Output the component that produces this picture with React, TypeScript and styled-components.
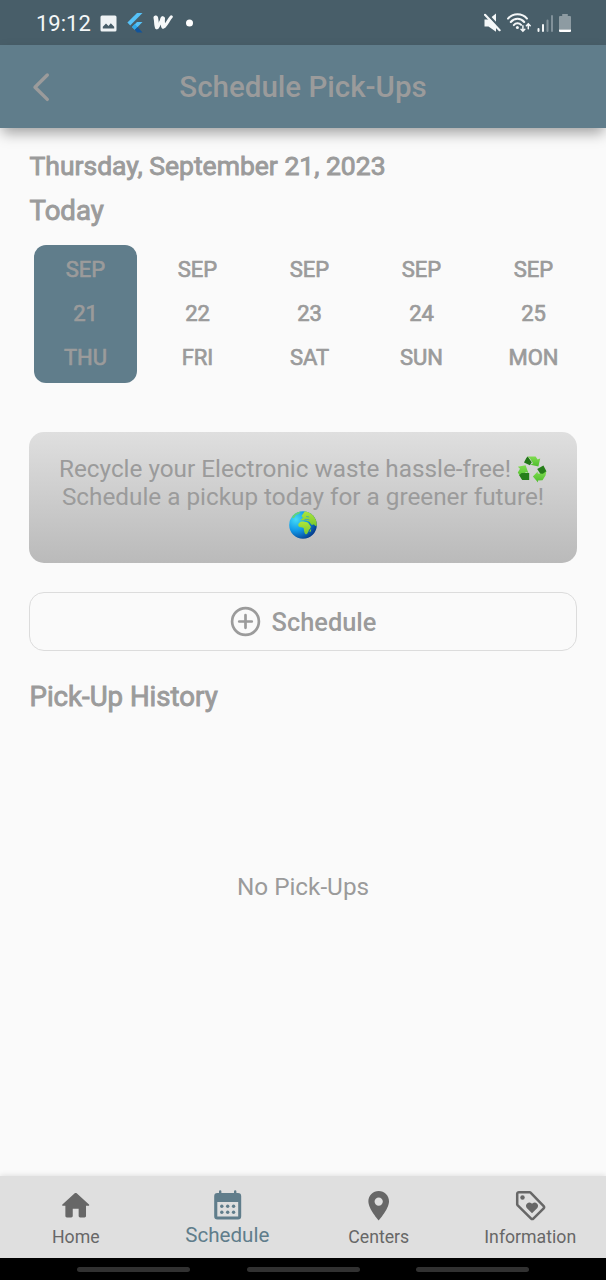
import React from "react";
import styled, { createGlobalStyle } from "styled-components";

const Global = createGlobalStyle`
  * { box-sizing: border-box; }
  body { margin: 0; background: #fafafa; font-family: Roboto, "Liberation Sans", sans-serif; }
  svg { display: block; flex: none; }
`;

const Screen = styled.div`
  width: 606px;
  height: 1280px;
  display: flex;
  flex-direction: column;
  overflow: hidden;
  background: #fafafa;
  color: #9b9b9b;
`;

const StatusBar = styled.div`
  height: 45px;
  flex: none;
  display: flex;
  align-items: center;
  background: #485e69;
  color: #f4f7f8;
  padding: 1px 35px 0 36px;
`;

const Clock = styled.span`
  width: 55px;
  margin-right: 9px;
  padding-top: 2px;
  font-size: 22px;
  line-height: 26px;
  white-space: nowrap;
`;

const StatusIcons = styled.div<{ $gap: number; $end?: boolean }>`
  display: flex;
  align-items: center;
  gap: ${(p) => p.$gap}px;
  margin-left: ${(p) => (p.$end ? "auto" : "0")};
`;

const AppBar = styled.header`
  height: 83px;
  flex: none;
  display: grid;
  grid-template-columns: 82px 1fr 82px;
  align-items: center;
  background: #607d8b;
  box-shadow: 0 7px 13px -2px rgba(0, 0, 0, 0.36);
`;

const BackButton = styled.button`
  border: 0;
  background: none;
  padding: 0 0 0 32px;
`;

const Title = styled.h1`
  margin: 0;
  text-align: center;
  font-size: 29.5px;
  font-weight: 500;
  line-height: 36px;
  letter-spacing: 0;
`;

const Content = styled.main`
  flex: 1;
  display: flex;
  flex-direction: column;
  padding: 16px 29px 0 29px;
`;

const Heading = styled.h2<{ $size: number }>`
  margin: 0;
  padding-left: 0.5px;
  font-size: ${(p) => p.$size}px;
  line-height: 44px;
  font-weight: 400;
  -webkit-text-stroke: 0.9px currentColor;
  white-space: nowrap;
`;

const DateHeader = styled.div`
  display: flex;
  flex-direction: column;
  gap: 1px;
`;

const Days = styled.div`
  display: flex;
  gap: 9px;
  margin: 11.5px 0 0 5px;
`;

const Day = styled.div<{ $active?: boolean }>`
  width: 103px;
  height: 138.5px;
  flex: none;
  display: flex;
  flex-direction: column;
  align-items: center;
  justify-content: center;
  border-radius: 12px;
  background: ${(p) => (p.$active ? "#607d8b" : "transparent")};
  font-size: 22px;
  line-height: 44px;
  -webkit-text-stroke: 0.7px currentColor;
`;

const Banner = styled.section`
  height: 131px;
  margin-top: 48.5px;
  padding: 23px 20px 0;
  border-radius: 15px;
  background: linear-gradient(#dfdfdf, #bababa);
  display: flex;
  flex-direction: column;
  align-items: center;
  font-size: 24.3px;
  line-height: 28px;
`;

const BannerLine = styled.div`
  height: 28px;
  display: flex;
  align-items: center;
  gap: 6px;
  white-space: nowrap;
`;

const ScheduleButton = styled.button`
  height: 59px;
  margin: 29.5px 0 0;
  padding: 0;
  border: 1.5px solid #dcdcdc;
  border-radius: 15px;
  background: transparent;
  display: flex;
  align-items: center;
  justify-content: center;
  gap: 11px;
  color: inherit;
  font: 500 25.4px/30px Roboto, sans-serif;
`;

const ButtonLabel = styled.span`
  padding-top: 1px;
`;

const History = styled.section`
  padding-top: 24px;
  display: flex;
  flex-direction: column;
`;

const Empty = styled.p`
  margin: 154px 0 0;
  text-align: center;
  font-size: 24.3px;
  line-height: 28px;
`;

const TabBar = styled.nav`
  height: 82.5px;
  flex: none;
  display: grid;
  grid-template-columns: repeat(4, 1fr);
  background: #dfdfdf;
  box-shadow: 0 -1px 5px rgba(0, 0, 0, 0.1);
`;

const Tab = styled.div<{ $active?: boolean }>`
  display: flex;
  flex-direction: column;
  align-items: center;
  padding-top: ${(p) => (p.$active ? 11 : 12)}px;
  color: ${(p) => (p.$active ? "#607d8b" : "#676767")};
  font-size: ${(p) => (p.$active ? 20.6 : 17.7)}px;
  line-height: ${(p) => (p.$active ? 27 : 28)}px;
  white-space: nowrap;
`;

const SystemNav = styled.footer`
  height: 22px;
  flex: none;
  display: flex;
  justify-content: center;
  gap: 56.5px;
  padding-top: 9px;
  background: #000;
`;

const Pill = styled.span`
  width: 113px;
  height: 5px;
  border-radius: 3px;
  background: #313131;
`;

const PictureIcon = () => (
  <svg width="17" height="17" viewBox="0 0 17 17" fill="#eff3f5">
    <path
      fillRule="evenodd"
      d="M2 .5h13a1.5 1.5 0 0 1 1.500 1.500v13a1.500 1.500 0 0 1-1.500 1.500H2A1.500 1.500 0 0 1 .5 15V2A1.500 1.500 0 0 1 2 .5ZM2.800 13.500h11.400v-1.800L10.800 8.200 8.500 10.900 6 8.400l-3.200 3.400Z"
    />
  </svg>
);

const FlutterIcon = () => (
  <svg width="16" height="20" viewBox="0 0 16 20">
    <path d="M10 0h5.500L3.200 12.400.4 9.600Z" fill="#56c2f8" />
    <path d="M10 9h5.500l-4.900 4.900-2.800 2.900L5 13.900Z" fill="#56c2f8" />
    <path d="m7.800 11.100 2.800 2.800-2.800 2.900L5 13.900Z" fill="#2fa9ea" />
    <path d="m7.800 16.800 2.800-2.900 4.900 5.500H10Z" fill="#11549b" />
  </svg>
);

const WattpadIcon = () => (
  <svg width="20" height="16" viewBox="0 0 20 16" fill="none" stroke="#f6f8f9" strokeLinecap="round" strokeLinejoin="round">
    <path d="M2.700 3.600C3.400 7 3.200 10 3.700 12.700 6.500 10.500 7.700 6 9.800 3.200c.3 3-.8 6.500.2 9 3.200-1.200 5-6.700 8.300-10.400" strokeWidth="3" />
    <path d="M2.800 2.800c.8 3 .5 6 1.200 9M9.700 3.500c-.3 2.500-.4 5 .8 7.500" strokeWidth="4.600" />
  </svg>
);

const MuteIcon = () => (
  <svg width="18" height="20" viewBox="0 0 18 20">
    <path d="M.5 6.500h4L12 .6v18.200l-7.500-5.300h-4Z" fill="#f4f7f8" />
    <path d="M2.200.2 17 15.800" stroke="#485e69" strokeWidth="2.600" />
    <path d="M1 1.800 15.600 17.200" stroke="#f4f7f8" strokeWidth="2.200" strokeLinecap="round" />
  </svg>
);

const WifiIcon = () => (
  <svg width="24" height="20" viewBox="0 0 24 20" fill="none" stroke="#f4f7f8" strokeWidth="2" strokeLinecap="round">
    <path d="M1 5.600C6-.1 15-.1 20 5.600M3.800 9c3.500-4.200 10-4.200 13.400 0M6.800 12.100c2-2.300 5.300-2.300 7.300-.2" />
    <circle cx="10.400" cy="14.500" r="1.500" fill="#f4f7f8" stroke="none" />
    <path d="M15.900 12.800v5M14 16.200l1.900 1.900 1.900-1.900M21.300 15.800v-4.700M19.400 12.700l1.900-1.900 1.900 1.900" strokeWidth="1.500" />
  </svg>
);

const SignalIcon = () => (
  <svg width="17" height="19" viewBox="0 0 17 19" strokeWidth="2" strokeLinecap="round">
    <path d="M1.500 15v2M6 11v6" stroke="#f4f7f8" />
    <path d="M10.500 6.500V17M15 2v15" stroke="#81919a" />
  </svg>
);

const BatteryIcon = () => (
  <svg width="12" height="19" viewBox="0 0 12 19">
    <path d="M3.200 0h5.600v2H11a1 1 0 0 1 1 1v12.500H0V3a1 1 0 0 1 1-1h2.200Z" fill="#8d9ba2" />
    <path d="M0 15.500h12V17a1 1 0 0 1-1 1H1a1 1 0 0 1-1-1Z" fill="#fff" />
  </svg>
);

const BackIcon = () => (
  <svg width="20" height="30" viewBox="0 0 20 30" fill="none" stroke="#9b9b9b" strokeWidth="3.400" strokeLinecap="round" strokeLinejoin="round">
    <path d="M15.300 3 3 15.200 15.300 27.400" />
  </svg>
);

const RecycleIcon = () => (
  <svg width="30" height="28" viewBox="0 0 30 28">
    <defs>
      <linearGradient id="leaf" x1="0" y1="0" x2="0" y2="1">
        <stop offset="0" stopColor="#7fdc50" />
        <stop offset="1" stopColor="#4ebd2c" />
      </linearGradient>
    </defs>
    <path d="M10.500 1.500H18.600L20.600 4.500 23.200 3.400 21.400 11.600 13.600 9.800 16 8.200 13 3.500Z" fill="url(#leaf)" />
    <path d="M10.700 1.500 14.800 7.200 12.900 10.200 7 7.400 9.300 2.900Z" fill="#237719" />
    <path d="M.8 11.800 8.600 10.300 11.400 18 8.800 17 5 24.200.8 17.600 3 13.800Z" fill="url(#leaf)" />
    <path d="M4.600 18H12.200v7.100H5.200L2.200 20.200Z" fill="#267e1a" />
    <path d="m20.200 14.100 6.200-3.500 3 5.700-2.200 3.400-3.600-.4Z" fill="#267e1a" />
    <path d="M29.300 16.200 28.500 20.500 25.500 25.300 21 25.500v2L15.900 21.500 20.700 16.400v2.200l5.200.2Z" fill="url(#leaf)" />
  </svg>
);

const GlobeIcon = () => (
  <svg width="28" height="28" viewBox="0 0 28 28">
    <defs>
      <radialGradient id="sea" cx="0.25" cy="0.3" r="0.8">
        <stop offset="0" stopColor="#45dcf6" />
        <stop offset="0.5" stopColor="#1199e8" />
        <stop offset="1" stopColor="#063c8c" />
      </radialGradient>
      <linearGradient id="land" x1="0" y1="0" x2="0" y2="1">
        <stop offset="0" stopColor="#aee639" />
        <stop offset="1" stopColor="#78c92f" />
      </linearGradient>
      <clipPath id="disc">
        <circle cx="14" cy="14" r="13.800" />
      </clipPath>
    </defs>
    <g clipPath="url(#disc)">
      <rect width="28" height="28" fill="url(#sea)" />
      <path
        d="M10.500 11.800C12 10.200 14 10.600 15.500 10.800c2 .5 3.600.1 4.400 1.900l2 3.100c-.2 2-2 2.400-2.300 4.100-.7 2-1.700 3.400-3.100 3.400-1.200-1.200-1.200-3-1.600-4.600.2-1.800-1-2.300-2.900-2.400-2.700-.3-3.800-2.300-1.500-4.500Z"
        fill="url(#land)"
      />
      <path
        d="M11.500 9.600c.2-1.500 1.600-1.800 2.400-2.900L12.500 5 16 0h7l5 6v8.500c-1 .8-2 .3-2.500-.6-.8-.8-1.800-.5-2.500.2-1.400-.8-1.700-2.300-2.700-3.300l-2.600-1c-2.700-.7-3.700-.8-6.200-.2Z"
        fill="url(#land)"
      />
      <path d="M3 7C4 3 7 0 12 .3L10 3 7 4 5 7Z" fill="#62d27a" />
      <path d="M15.500 8.700c1.800-.6 3.300-.2 4.800.1M17.200 5.500l3 .5" stroke="#2c9fd0" strokeWidth="0.800" fill="none" />
      <path d="m21.700 18.500-.7 2.400" stroke="#8bd52d" strokeWidth="1" />
    </g>
  </svg>
);

const PlusCircleIcon = () => (
  <svg width="31" height="31" viewBox="0 0 31 31" fill="none" stroke="#9b9b9b" strokeWidth="2.700" strokeLinecap="round">
    <circle cx="15.500" cy="15.500" r="13.400" />
    <path d="M15.500 9.200v12.600M9.200 15.500h12.600" />
  </svg>
);

const HomeIcon = () => (
  <svg width="35.400" height="35.400" viewBox="0 0 24 24" fill="currentColor">
    <path d="M10 19v-5h4v5c0 .55.45 1 1 1h3c.55 0 1-.45 1-1v-7h1.700c.46 0 .68-.57.33-.87L12.670 3.600c-.38-.34-.96-.34-1.340 0l-8.360 7.530c-.34.300-.13.870.33.870H5v7c0 .55.45 1 1 1h3c.55 0 1-.45 1-1z" />
  </svg>
);

const CalendarIcon = () => (
  <svg width="35.400" height="35.400" viewBox="0 0 35.400 35.400" fill="currentColor">
    <path
      fillRule="evenodd"
      d="M7.400 6H9V4.500a1 1 0 0 1 2.400 0V6h12.600V4.500a1 1 0 0 1 2.400 0V6H28a3.200 3.200 0 0 1 3.200 3.200v20a3.200 3.200 0 0 1-3.200 3.200H7.400a3.200 3.200 0 0 1-3.200-3.200V9.200A3.200 3.200 0 0 1 7.400 6ZM7.300 15v14.500h20.900V15Z"
    />
    {[11.8, 17.7, 23.6].map((x) => (
      <React.Fragment key={x}>
        <circle cx={x} cy="19.300" r="1.700" />
        <circle cx={x} cy="25.300" r="1.700" />
      </React.Fragment>
    ))}
  </svg>
);

const PinIcon = () => (
  <svg width="35.400" height="35.400" viewBox="0 0 24 24" fill="currentColor">
    <path fillRule="evenodd" d="M12 2C8.130 2 5 5.130 5 9c0 5.250 7 13 7 13s7-7.750 7-13c0-3.870-3.130-7-7-7Zm0 10a2.800 2.800 0 1 1 0-5.600 2.800 2.800 0 0 1 0 5.600Z" />
  </svg>
);

const TagHeartIcon = () => (
  <svg width="35.400" height="35.400" viewBox="0 0 24 24" fill="currentColor">
    <path
      d="M4 2.850h7.200l.7.300 8.900 9.100c.45.45.45 1.050 0 1.500l-7 7c-.45.45-1.050.45-1.500 0l-9.100-8.900-.35-.75V4A1.150 1.150 0 0 1 4 2.850Z"
      fill="none"
      stroke="currentColor"
      strokeWidth="1.700"
      strokeLinejoin="round"
    />
    <circle cx="6.450" cy="6.500" r="1.500" />
    <path d="m12.900 17.100-3.600-3.600a2.300 2.300 0 0 1 3.200-3.200l.4.400.4-.4a2.300 2.300 0 0 1 3.200 3.200Z" />
  </svg>
);

const days: [string, string][] = [
  ["21", "THU"],
  ["22", "FRI"],
  ["23", "SAT"],
  ["24", "SUN"],
  ["25", "MON"],
];

const tabs = [
  { label: "Home", Icon: HomeIcon },
  { label: "Schedule", Icon: CalendarIcon },
  { label: "Centers", Icon: PinIcon },
  { label: "Information", Icon: TagHeartIcon },
];

export default function App() {
  return (
    <Screen>
      <Global />
      <StatusBar>
        <Clock>19:12</Clock>
        <StatusIcons $gap={10}>
          <PictureIcon />
          <FlutterIcon />
          <WattpadIcon />
          <svg width="12" height="8" viewBox="0 0 12 8">
            <circle cx="6.500" cy="4" r="3.500" fill="#fff" />
          </svg>
        </StatusIcons>
        <StatusIcons $gap={5.5} $end>
          <MuteIcon />
          <WifiIcon />
          <SignalIcon />
          <BatteryIcon />
        </StatusIcons>
      </StatusBar>
      <AppBar>
        <BackButton aria-label="Back">
          <BackIcon />
        </BackButton>
        <Title>Schedule Pick-Ups</Title>
      </AppBar>
      <Content>
        <DateHeader>
          <Heading $size={26.5}>Thursday, September 21, 2023</Heading>
          <Heading $size={27.6}>Today</Heading>
        </DateHeader>
        <Days>
          {days.map(([date, name], i) => (
            <Day key={date} $active={i === 0}>
              <span>SEP</span>
              <span>{date}</span>
              <span>{name}</span>
            </Day>
          ))}
        </Days>
        <Banner>
          <BannerLine>
            Recycle your Electronic waste hassle-free!
            <RecycleIcon />
          </BannerLine>
          <BannerLine>Schedule a pickup today for a greener future!</BannerLine>
          <BannerLine>
            <GlobeIcon />
          </BannerLine>
        </Banner>
        <ScheduleButton>
          <PlusCircleIcon />
          <ButtonLabel>Schedule</ButtonLabel>
        </ScheduleButton>
        <History>
          <Heading $size={27.6}>Pick-Up History</Heading>
          <Empty>No Pick-Ups</Empty>
        </History>
      </Content>
      <TabBar>
        {tabs.map(({ label, Icon }) => (
          <Tab key={label} $active={label === "Schedule"}>
            <Icon />
            {label}
          </Tab>
        ))}
      </TabBar>
      <SystemNav>
        <Pill />
        <Pill />
        <Pill />
      </SystemNav>
    </Screen>
  );
}
